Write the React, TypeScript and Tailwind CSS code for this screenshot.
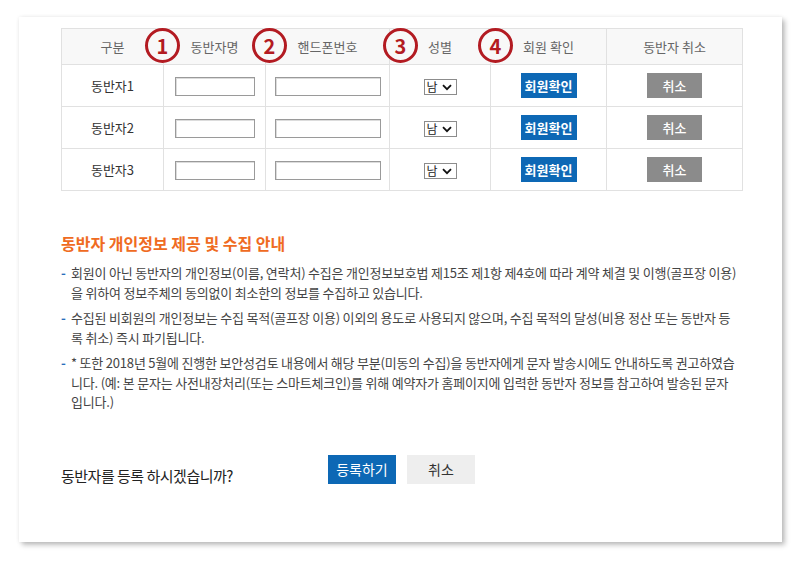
import React from "react";

const font = { fontFamily: '"Noto Sans CJK KR", "Noto Sans", sans-serif' };

const rows = ["동반자1", "동반자2", "동반자3"];

const notes = [
  "회원이 아닌 동반자의 개인정보(이름, 연락처) 수집은 개인정보보호법 제15조 제1항 제4호에 따라 계약 체결 및 이행(골프장 이용)을 위하여 정보주체의 동의없이 최소한의 정보를 수집하고 있습니다.",
  "수집된 비회원의 개인정보는 수집 목적(골프장 이용) 이외의 용도로 사용되지 않으며, 수집 목적의 달성(비용 정산 또는 동반자 등록 취소) 즉시 파기됩니다.",
  "* 또한 2018년 5월에 진행한 보안성검토 내용에서 해당 부분(미동의 수집)을 동반자에게 문자 발송시에도 안내하도록 권고하였습니다. (예: 본 문자는 사전내장처리(또는 스마트체크인)를 위해 예약자가 홈페이지에 입력한 동반자 정보를 참고하여 발송된 문자입니다.)",
];

function Badge({ n, left }: { n: number; left: string }) {
  return (
    <div
      className={`absolute top-0 ${left} w-[35px] h-[35px] rounded-full border-[3px] border-[#b31b22] bg-[#f8f8f8] flex items-center justify-center text-[20px] font-bold text-[#b31b22] leading-none`}
    >
      {n}
    </div>
  );
}

function GenderSelect() {
  return (
    <div className="inline-flex items-center w-[33px] h-[16px] border border-[#8c8c8c] bg-white pl-[2px] gap-[4px] align-middle">
      <span className="text-[12px] leading-none text-[#222]">남</span>
      <svg width="10" height="7" viewBox="0 0 10 7">
        <path d="M1 1.2 L5 5.2 L9 1.2" fill="none" stroke="#111" strokeWidth="1.8" />
      </svg>
    </div>
  );
}

export default function App() {
  return (
    <div className="w-[800px] h-[567px] bg-white pl-[19px] pt-[17px]" style={font}>
      <div className="w-[763px] h-[525px] bg-white shadow-[0_0_4px_rgba(0,0,0,0.07),3px_3px_5px_rgba(0,0,0,0.25)] pt-[11px] pl-[42px]">
        {/* table */}
        <div className="relative w-[681px]">
          <table className="w-[681px] table-fixed border-collapse text-[13px]">
            <colgroup>
              <col className="w-[102px]" />
              <col className="w-[102px]" />
              <col className="w-[124px]" />
              <col className="w-[101px]" />
              <col className="w-[116px]" />
              <col className="w-[136px]" />
            </colgroup>
            <thead>
              <tr className="h-[36px] bg-[#f8f8f8] text-[#666]">
                <th className="border border-[#e1e1e1] font-normal">구분</th>
                <th className="border border-[#e1e1e1] font-normal">동반자명</th>
                <th className="border border-[#e1e1e1] font-normal">핸드폰번호</th>
                <th className="border border-[#e1e1e1] font-normal">성별</th>
                <th className="border border-[#e1e1e1] font-normal">회원 확인</th>
                <th className="border border-[#e1e1e1] font-normal">동반자 취소</th>
              </tr>
            </thead>
            <tbody>
              {rows.map((r) => (
                <tr key={r} className="h-[42px] text-[#333]">
                  <td className="border border-[#e1e1e1] text-center">{r}</td>
                  <td className="border border-[#e1e1e1] text-center">
                    <input className="w-[80px] h-[19px] border border-[#9a9a9a] shadow-[inset_1px_1px_0_#dcdcdc] align-middle" />
                  </td>
                  <td className="border border-[#e1e1e1] text-center">
                    <input className="w-[106px] h-[19px] border border-[#9a9a9a] shadow-[inset_1px_1px_0_#dcdcdc] align-middle" />
                  </td>
                  <td className="border border-[#e1e1e1] text-center">
                    <GenderSelect />
                  </td>
                  <td className="border border-[#e1e1e1] text-center">
                    <button className="w-[56px] h-[25px] bg-[#0d68b5] text-white text-[13px] font-bold leading-none align-middle">
                      회원확인
                    </button>
                  </td>
                  <td className="border border-[#e1e1e1] text-center">
                    <button className="w-[55px] h-[25px] bg-[#8b8b8b] text-white text-[13px] font-medium leading-none align-middle">
                      취소
                    </button>
                  </td>
                </tr>
              ))}
            </tbody>
          </table>
          <Badge n={1} left="left-[84px]" />
          <Badge n={2} left="left-[191px]" />
          <Badge n={3} left="left-[322px]" />
          <Badge n={4} left="left-[417px]" />
        </div>

        {/* notice */}
        <div className="mt-[40px] w-[690px]">
          <h3 className="text-[16px] leading-[24px] font-bold text-[#ef6b22]">
            동반자 개인정보 제공 및 수집 안내
          </h3>
          <ul className="mt-[8px] flex flex-col gap-[6px]">
            {notes.map((t) => (
              <li key={t} className="flex text-[13px] leading-[19.5px] tracking-[-0.2px] text-[#444]">
                <span className="w-[10px] shrink-0 text-[#2a6ebb] font-bold">-</span>
                <span className="w-[667px]">{t}</span>
              </li>
            ))}
          </ul>
        </div>

        {/* confirm */}
        <div className="mt-[43px] flex items-start">
          <p className="w-[267px] shrink-0 mt-[11px] text-[15px] leading-[20px] tracking-[-0.5px] text-[#222]">
            동반자를 등록 하시겠습니까?
          </p>
          <button className="w-[68px] h-[29px] bg-[#0d68b5] text-white text-[14px]">등록하기</button>
          <button className="ml-[11px] w-[68px] h-[29px] bg-[#eeeeee] text-[#333] text-[14px]">취소</button>
        </div>
      </div>
    </div>
  );
}
